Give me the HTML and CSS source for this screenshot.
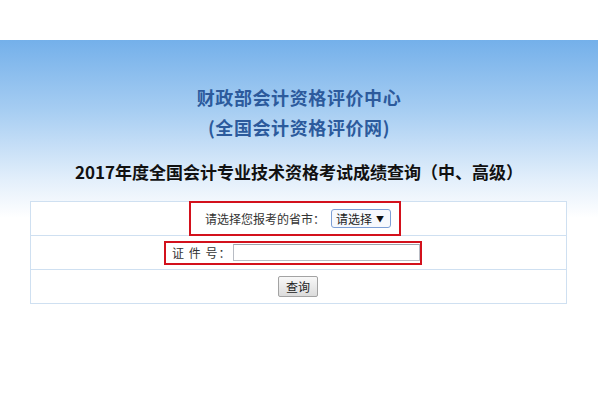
FILE: index.html
```html
<!DOCTYPE html>
<html lang="zh-CN">
<head>
<meta charset="utf-8">
<title>2017年度全国会计专业技术资格考试成绩查询</title>
<link rel="stylesheet" href="styles.css">
</head>
<body>
<div class="top-gap"></div>
<div class="banner">
  <div class="org">
    <div class="org-line">财政部会计资格评价中心</div>
    <div class="org-line">(全国会计资格评价网)</div>
  </div>
  <h1 class="query-title">2017年度全国会计专业技术资格考试成绩查询（中、高级）</h1>
  <table class="query-table">
    <tr>
      <td class="row-cell">
        <span class="mark mark-province">
          <span class="label">请选择您报考的省市：</span>
          <span class="fake-select">请选择 <span class="arrow">▼</span></span>
        </span>
      </td>
    </tr>
    <tr>
      <td class="row-cell">
        <span class="mark mark-id">
          <span class="label label-id">证 件 号：</span>
          <span class="fake-input"></span>
        </span>
      </td>
    </tr>
    <tr>
      <td class="row-cell">
        <button class="query-btn" type="button">查询</button>
      </td>
    </tr>
  </table>
</div>
</body>
</html>
```

FILE: styles.css
```css
html, body {
  margin: 0;
  padding: 0;
  background: #ffffff;
  font-family: "Noto Sans CJK SC", "Noto Sans", sans-serif;
}

.top-gap {
  height: 40px;
  background: #ffffff;
}

.banner {
  width: 598px;
  height: 360px;
  background: linear-gradient(to bottom, #74b0ea 0px, #a6cdf2 70px, #e3effb 140px, #ffffff 178px);
  padding-top: 42px;
  box-sizing: border-box;
}

.org {
  text-align: center;
  color: #2c5a9c;
  font-size: 18px;
  font-weight: 700;
  line-height: 30px;
  letter-spacing: 0.6px;
}

.query-title {
  margin: 15px 0 0 0;
  text-align: center;
  font-size: 17px;
  font-weight: 700;
  line-height: 30px;
  color: #111111;
}

.query-table {
  margin: 14px 0 0 30px;
  width: 537px;
  border-collapse: collapse;
  background: #ffffff;
}

.row-cell {
  height: 33px;
  padding: 0;
  border: 1px solid #cfe0f1;
  text-align: center;
  vertical-align: middle;
  font-size: 12px;
  color: #333333;
  line-height: 1;
}

.mark {
  display: inline-flex;
  align-items: center;
  box-sizing: border-box;
  border: 2px solid #d3111c;
  vertical-align: middle;
}

.mark-province {
  width: 212px;
  height: 35px;
  margin: -1px 0 -1px -7px;
  padding-left: 14px;
}

.mark-id {
  width: 258px;
  height: 24px;
  padding-left: 6px;
  margin-left: -11px;
}

.label {
  font-size: 12px;
  color: #333333;
  white-space: nowrap;
}

.label-id {
  letter-spacing: 1px;
}

.fake-select {
  display: inline-flex;
  align-items: center;
  box-sizing: border-box;
  margin-left: 6px;
  width: 60px;
  height: 19px;
  padding-left: 4px;
  border: 1px solid #7d9fd6;
  border-radius: 3px;
  background: #f7f9fd;
  font-size: 12px;
  color: #222222;
  white-space: nowrap;
}

.arrow {
  font-size: 8px;
  margin-left: 4px;
  color: #111111;
}

.fake-input {
  display: inline-block;
  box-sizing: border-box;
  margin-left: 2px;
  width: 192px;
  height: 17px;
  border: 1px solid #b8bcc4;
  border-top-color: #9ea3ab;
  background: #ffffff;
}

.query-btn {
  box-sizing: border-box;
  width: 40px;
  height: 21px;
  padding: 0;
  margin-left: -1px;
  border: 1px solid #a3a3a3;
  border-radius: 2px;
  background: linear-gradient(to bottom, #f8f8f8, #dcdcdc);
  font-family: "Noto Sans CJK SC", sans-serif;
  font-size: 12px;
  color: #222222;
  vertical-align: middle;
}
```
